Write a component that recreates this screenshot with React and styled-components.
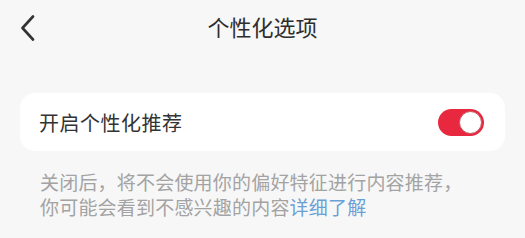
import React, { useState } from "react";
import styled, { createGlobalStyle } from "styled-components";

const Global = createGlobalStyle`
  html, body { margin: 0; padding: 0; background: #f7f7f7; }
  body { font-family: "Noto Sans CJK SC", "Noto Sans", sans-serif; }
`;

const Page = styled.div`
  width: 525px;
  height: 238px;
  background: #f7f7f7;
  display: flex;
  flex-direction: column;
`;

const Header = styled.header`
  height: 56px;
  display: grid;
  grid-template-columns: 60px 1fr 60px;
  align-items: center;
`;

const BackButton = styled.button`
  border: 0;
  background: none;
  padding: 0 0 0 20px;
  height: 56px;
  display: flex;
  align-items: center;
  cursor: pointer;
`;

const Title = styled.h1`
  margin: 0;
  text-align: center;
  font-size: 22px;
  font-weight: 400;
  color: #2e2e2e;
  line-height: 30px;
  margin-top: -4px;
`;

const Card = styled.div`
  margin: 37px 20px 0 20px;
  height: 58px;
  background: #fff;
  border-radius: 15px;
  display: flex;
  align-items: center;
  justify-content: space-between;
  padding: 0 21px 0 19px;
`;

const Label = styled.span`
  font-size: 20px;
  color: #333;
  letter-spacing: 0.5px;
`;

const Switch = styled.button`
  width: 46px;
  height: 27px;
  border-radius: 14px;
  border: 0;
  padding: 2px;
  background: ${(p) => (p.$on ? "#e8283e" : "#ccc")};
  display: flex;
  justify-content: ${(p) => (p.$on ? "flex-end" : "flex-start")};
  align-items: center;
  cursor: pointer;
`;

const Knob = styled.span`
  width: 23px;
  height: 23px;
  box-sizing: border-box;
  border-radius: 50%;
  background: #fff;
  border: 1.5px solid #c25560;
`;

const Note = styled.p`
  margin: 18px 0 0 40px;
  font-size: 19px;
  line-height: 25px;
  color: #a3a3a3;
  letter-spacing: 0.2px;
`;

const Link = styled.a`
  color: #6b9fd6;
  text-decoration: none;
`;

export default function App() {
  const [on, setOn] = useState(true);
  return (
    <Page>
      <Global />
      <Header>
        <BackButton aria-label="返回">
          <svg width="16" height="26" viewBox="0 0 16 26">
            <path d="M13 1.5 L2.5 13 L13 24.5" fill="none" stroke="#333" strokeWidth="2.6" strokeLinecap="round" strokeLinejoin="round" />
          </svg>
        </BackButton>
        <Title>个性化选项</Title>
        <span />
      </Header>
      <Card>
        <Label>开启个性化推荐</Label>
        <Switch $on={on} onClick={() => setOn(!on)} aria-label="开启个性化推荐">
          <Knob />
        </Switch>
      </Card>
      <Note>
        关闭后，将不会使用你的偏好特征进行内容推荐，
        <br />
        你可能会看到不感兴趣的内容<Link href="#">详细了解</Link>
      </Note>
    </Page>
  );
}
